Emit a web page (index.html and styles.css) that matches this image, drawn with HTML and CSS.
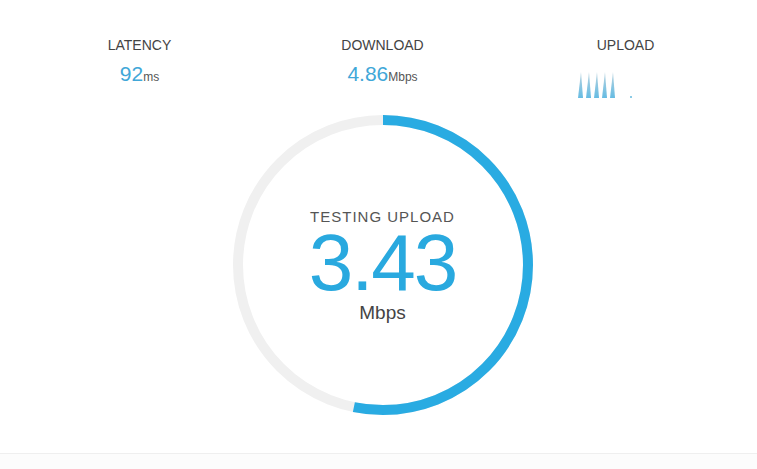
FILE: index.html
```html
<!DOCTYPE html>
<html lang="en">
<head>
    <meta charset="UTF-8">
    <meta name="viewport" content="width=device-width, initial-scale=1.0">
    <title>Speed Test</title>
    <link rel="stylesheet" href="styles.css">
</head>
<body>
    <main class="speedtest">
        <div class="stats">
            <div class="stat">
                <div class="stat-label">LATENCY</div>
                <div class="stat-value">92<span class="unit">ms</span></div>
            </div>
            <div class="stat">
                <div class="stat-label">DOWNLOAD</div>
                <div class="stat-value">4.86<span class="unit">Mbps</span></div>
            </div>
            <div class="stat">
                <div class="stat-label">UPLOAD</div>
                <div class="stat-value stat-value-icon">
                    <div class="bars">
                        <svg width="60" height="27" viewBox="0 0 60 27">
                            <defs>
                                <linearGradient id="spike" x1="0" y1="0" x2="0" y2="1">
                                    <stop offset="0" stop-color="#b9d3df"/>
                                    <stop offset="1" stop-color="#66bce3"/>
                                </linearGradient>
                            </defs>
                            <polygon points="3,0 5,26 0,26" fill="url(#spike)"/>
                            <polygon points="11,0 13,26 8,26" fill="url(#spike)"/>
                            <polygon points="19,0 21,26 16,26" fill="url(#spike)"/>
                            <polygon points="27,0 29,26 24,26" fill="url(#spike)"/>
                            <polygon points="35,0 37,26 32,26" fill="url(#spike)"/>
                            <rect x="52" y="24" width="2" height="2" fill="#8ccbe6"/>
                        </svg>
                    </div>
                </div>
            </div>
        </div>

        <div class="gauge">
            <svg class="gauge-ring" width="300" height="300" viewBox="0 0 300 300">
                <circle cx="150" cy="150" r="145" fill="none" stroke="#f0f0f0" stroke-width="10"/>
                <circle cx="150" cy="150" r="145" fill="none" stroke="#29abe2" stroke-width="10"
                        stroke-dasharray="484.7 911.1" transform="rotate(-90 150 150)"/>
            </svg>
            <div class="gauge-text">
                <div class="gauge-label">TESTING UPLOAD</div>
                <div class="gauge-number">3.43</div>
                <div class="gauge-unit">Mbps</div>
            </div>
        </div>
    </main>

    <footer class="page-footer"></footer>
</body>
</html>
```

FILE: styles.css
```css
body {
    margin: 0;
    padding: 0;
    background-color: #fff;
    font-family: "Liberation Sans", Arial, sans-serif;
    color: #444;
}

.speedtest {
    padding: 0 10px 0 18px;
}

.stats {
    display: grid;
    grid-template-columns: repeat(3, 1fr);
    height: 115px;
    box-sizing: border-box;
    padding-top: 37px;
}

.stat {
    text-align: center;
}

.stat-label {
    font-size: 14px;
    line-height: 16px;
    color: #444;
}

.stat-value {
    display: flex;
    justify-content: center;
    align-items: baseline;
    margin-top: 9px;
    font-size: 21px;
    line-height: 24px;
    color: #41a7d8;
}

.stat-value-icon {
    align-items: flex-start;
}

.unit {
    font-size: 12px;
    color: #555;
}

.bars {
    width: 100px;
    padding-top: 10px;
    text-align: left;
}

.bars svg {
    display: block;
    margin-left: 2px;
}

.gauge {
    position: relative;
    width: 300px;
    height: 300px;
    margin: 0 auto;
}

.gauge-ring {
    display: block;
}

/* text sits over the ring */
.gauge-text {
    position: absolute;
    inset: 0;
    display: flex;
    flex-direction: column;
    align-items: center;
    padding-top: 94px;
}

.gauge-label {
    font-size: 15px;
    line-height: 15px;
    letter-spacing: 1px;
    color: #555;
}

.gauge-number {
    margin-top: 1px;
    font-size: 80px;
    line-height: 76px;
    letter-spacing: -2px;
    color: #29a9df;
}

.gauge-unit {
    margin-top: 2px;
    font-size: 19px;
    line-height: 20px;
    color: #444;
}

.page-footer {
    margin-top: 38px;
    height: 16px;
    border-top: 1px solid #efefef;
    background-color: #fcfcfc;
}
```
